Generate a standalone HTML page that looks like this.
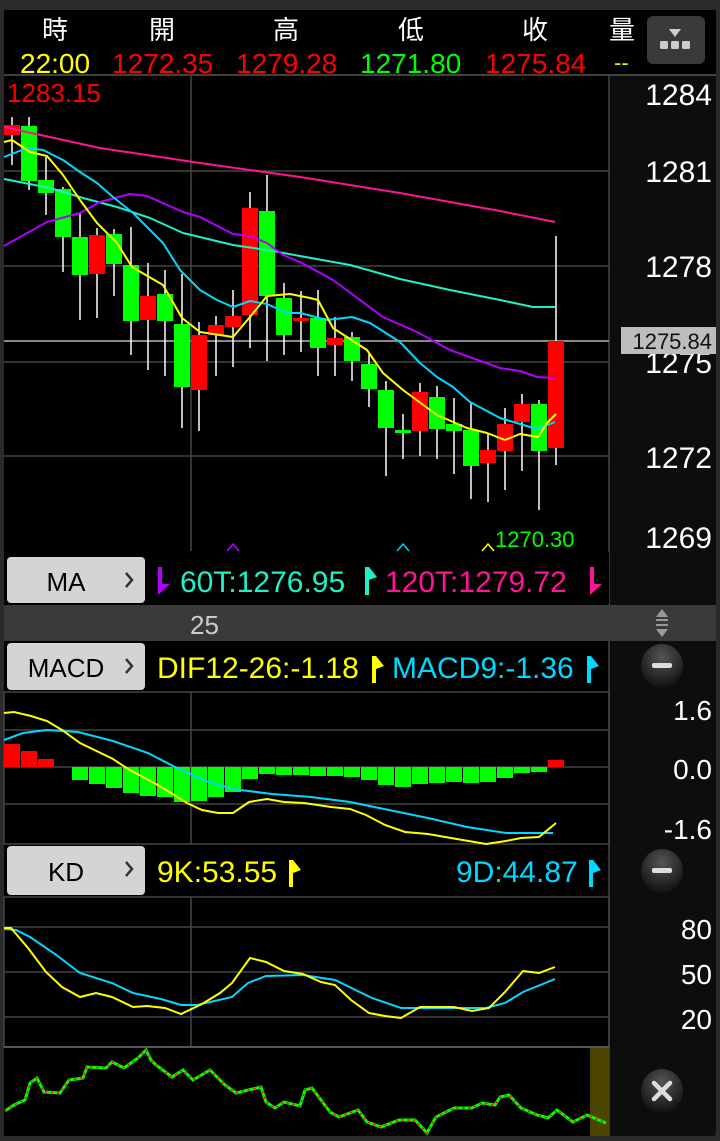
<!DOCTYPE html>
<html><head><meta charset="utf-8"><style>
html,body{margin:0;padding:0;background:#2a2a2a;}
svg{display:block;}
text{font-family:"Liberation Sans","Noto Sans CJK TC",sans-serif;}
</style></head><body>
<svg id="s" width="720" height="1141" xmlns="http://www.w3.org/2000/svg">
<rect x="0" y="0" width="720" height="1141" fill="#2a2a2a"/>
<rect x="4" y="10" width="712" height="1126" rx="3" fill="#0d0d0d"/>
<rect x="4" y="10" width="712" height="65" fill="#000"/>
<rect x="4" y="75" width="605" height="1061" fill="#000"/>
<line x1="4" y1="75" x2="716" y2="75" stroke="#555" stroke-width="1.5"/>
<!-- header -->
<g fill="#fff" font-size="26" text-anchor="middle">
<text x="55" y="39">時</text><text x="162" y="39">開</text><text x="286" y="39">高</text><text x="411" y="39">低</text><text x="535" y="39">收</text><text x="622" y="39">量</text>
</g>
<g font-size="28">
<text x="20" y="73" fill="#ffff00">22:00</text>
<text x="112" y="73" fill="#ff0000">1272.35</text>
<text x="236" y="73" fill="#ff0000">1279.28</text>
<text x="360" y="73" fill="#00ff00">1271.80</text>
<text x="485" y="73" fill="#ff0000">1275.84</text>
<text x="614" y="70" fill="#e6e600" font-size="22">--</text>
</g>
<rect x="647" y="16" width="58" height="48" rx="6" fill="#3a3a3a"/>
<polygon points="669,29 681,29 675,37" fill="#ccc"/>
<rect x="660" y="41" width="8" height="8" rx="1.5" fill="#ccc"/><rect x="671" y="41" width="8" height="8" rx="1.5" fill="#ccc"/><rect x="682" y="41" width="8" height="8" rx="1.5" fill="#ccc"/>
<!-- main grid -->
<g stroke="#444" stroke-width="1.5">
<line x1="4" y1="171" x2="609" y2="171"/><line x1="4" y1="266" x2="609" y2="266"/><line x1="4" y1="362" x2="609" y2="362"/><line x1="4" y1="456" x2="609" y2="456"/>
<line x1="191" y1="76" x2="191" y2="551"/>
<line x1="609" y1="76" x2="609" y2="1136"/>
</g>
<line x1="4" y1="341" x2="609" y2="341" stroke="#888" stroke-width="2"/>
<g id="cand"></g>
<g id="lines" fill="none" stroke-width="2" stroke-linejoin="round"></g>
<text x="7" y="102" fill="#ff0000" font-size="26">1283.15</text>
<text x="495" y="547" fill="#00ff00" font-size="22">1270.30</text>
<g fill="none" stroke-width="1.5"><polyline points="227,551 233,544 239,551" stroke="#b000ff"/><polyline points="397,551 403,544 409,551" stroke="#00d0ff"/><polyline points="482,551 488,544 494,551" stroke="#ffff00"/></g>
<g fill="#fff" font-size="30" text-anchor="end">
<text x="712" y="105">1284</text><text x="712" y="182">1281</text><text x="712" y="277">1278</text><text x="712" y="373">1275</text><text x="712" y="468">1272</text><text x="712" y="548">1269</text>
</g>
<rect x="621" y="327" width="95" height="27" fill="#bdbdbd"/>
<text x="712" y="349" fill="#111" font-size="22" text-anchor="end">1275.84</text>
<!-- MA row -->
<rect x="4" y="552" width="605" height="52" fill="#000"/>
<rect x="7" y="557" width="138" height="46" rx="4" fill="#d4d4d4"/>
<text x="66" y="591" font-size="26" fill="#000" text-anchor="middle">MA</text>
<polyline points="126,573 132,580 126,587" fill="none" stroke="#333" stroke-width="2.5"/>
<polygon points="158,567 162,567 162,584 170,584 158,595" fill="#b000ff"/>
<text x="180" y="592" font-size="30" fill="#20f0c8">60T:1276.95</text>
<polygon points="365,567 369,567 377,577 369,580 369,595 365,595" fill="#20f0c8"/>
<text x="385" y="592" font-size="30" fill="#ff1493">120T:1279.72</text>
<polygon points="590,567 594,567 594,584 602,584 590,595" fill="#ff1493"/>
<rect x="4" y="605" width="712" height="36" fill="#3a3a3a"/>
<text x="190" y="634" font-size="26" fill="#ccc">25</text>
<polygon points="656,617 668,617 662,609" fill="#999"/><rect x="656" y="619" width="12" height="2" fill="#999"/><rect x="656" y="624" width="12" height="2" fill="#999"/><polygon points="656,629 668,629 662,637" fill="#999"/>
<!-- MACD row -->
<rect x="7" y="643" width="138" height="47" rx="4" fill="#d4d4d4"/>
<text x="66" y="677" font-size="26" fill="#000" text-anchor="middle">MACD</text>
<polyline points="126,659 132,666 126,673" fill="none" stroke="#333" stroke-width="2.5"/>
<text x="157" y="678" font-size="30" fill="#ffff00">DIF12-26:-1.18</text>
<polygon points="372,656 376,656 384,666 376,669 376,683 372,683" fill="#ffff00"/>
<text x="392" y="678" font-size="30" fill="#00d8ff">MACD9:-1.36</text>
<polygon points="587,656 591,656 599,666 591,669 591,683 587,683" fill="#00d8ff"/>
<defs><radialGradient id="g" cx="50%" cy="30%" r="70%"><stop offset="0" stop-color="#555"/><stop offset="1" stop-color="#111"/></radialGradient></defs>
<ellipse cx="662" cy="666" rx="21" ry="22" fill="url(#g)"/><rect x="652" y="663" width="20" height="5" rx="2" fill="#ddd"/>
<rect x="4" y="692" width="605" height="152" fill="none" stroke="#444" stroke-width="1.5"/>
<g stroke="#444" stroke-width="1.5"><line x1="4" y1="730" x2="609" y2="730"/><line x1="4" y1="767" x2="609" y2="767"/><line x1="4" y1="804" x2="609" y2="804"/><line x1="191" y1="692" x2="191" y2="844"/></g>
<g id="hist"></g>
<g fill="#fff" font-size="28" text-anchor="end"><text x="712" y="720">1.6</text><text x="712" y="779">0.0</text><text x="712" y="839">-1.6</text></g>
<!-- KD row -->
<rect x="7" y="846" width="138" height="49" rx="4" fill="#d4d4d4"/>
<text x="66" y="881" font-size="26" fill="#000" text-anchor="middle">KD</text>
<polyline points="126,862 132,869 126,876" fill="none" stroke="#333" stroke-width="2.5"/>
<text x="157" y="882" font-size="30" fill="#ffff00">9K:53.55</text>
<polygon points="289,860 293,860 301,870 293,873 293,887 289,887" fill="#ffff00"/>
<text x="456" y="882" font-size="30" fill="#00d8ff">9D:44.87</text>
<polygon points="589,860 593,860 601,870 593,873 593,887 589,887" fill="#00d8ff"/>
<ellipse cx="662" cy="871" rx="21" ry="22" fill="url(#g)"/><rect x="652" y="868" width="20" height="5" rx="2" fill="#ddd"/>
<rect x="4" y="897" width="605" height="150" fill="none" stroke="#444" stroke-width="1.5"/>
<g stroke="#444" stroke-width="1.5"><line x1="4" y1="927" x2="609" y2="927"/><line x1="4" y1="972" x2="609" y2="972"/><line x1="4" y1="1017" x2="609" y2="1017"/><line x1="191" y1="897" x2="191" y2="1047"/></g>
<g fill="#fff" font-size="28" text-anchor="end"><text x="712" y="939">80</text><text x="712" y="984">50</text><text x="712" y="1029">20</text></g>
<!-- minimap -->
<line x1="4" y1="1047" x2="609" y2="1047" stroke="#555" stroke-width="2"/>
<rect x="590" y="1048" width="19" height="88" fill="#4a4400"/>
<g id="mini" fill="none"></g>
<ellipse cx="662" cy="1091" rx="21" ry="22" fill="url(#g)"/>
<path d="M654,1083 L670,1099 M670,1083 L654,1099" stroke="#ddd" stroke-width="4.5" stroke-linecap="round"/>
</svg>
<script>
var NS="http://www.w3.org/2000/svg";
function el(p,t,a){var e=document.createElementNS(NS,t);for(var k in a)e.setAttribute(k,a[k]);p.appendChild(e);return e;}
var R="#ff0000",G="#00ff00";
var c=[[R,125,135,117,165],[G,126,181,117,190],[G,180,193,157,215],[G,189,237,187,272],[G,237,275,213,320],[R,235,274,228,318],[G,234,264,229,296],[G,265,321,227,355],[R,296,320,263,370],[G,294,321,270,376],[G,324,387,274,428],[R,335,390,322,431],[R,325,335,316,376],[R,316,327,290,367],[R,208,315,192,348],[G,211,296,175,361],[G,298,335,283,355],[R,318,321,291,352],[G,318,348,290,376],[R,338,345,317,376],[G,337,361,332,381],[G,364,389,354,407],[G,390,428,381,476],[G,430,433,414,459],[R,392,431,383,456],[G,397,429,386,459],[G,424,431,398,474],[G,430,466,402,499],[R,450,463,434,502],[R,424,451,408,490],[R,404,422,394,471],[G,404,451,400,510],[R,341,448,236,465]];
var cg=document.getElementById("cand");
c.forEach(function(d,i){var x=4+17*i;el(cg,"line",{x1:x+8,y1:d[3],x2:x+8,y2:d[4],stroke:"#fff","stroke-width":1.5});el(cg,"rect",{x:x,y:d[1],width:16,height:Math.max(2,d[2]-d[1]),fill:d[0]});});
var L=document.getElementById("lines");
function pl(g,pts,col,w){el(g,"polyline",{points:pts,stroke:col,"stroke-width":w||2,fill:"none"});}
pl(L,"4,127 100,148 200,163 300,177 400,193 500,211 555,222","#ff1493");
pl(L,"4,179 50,188 83,198 117,207 150,218 183,233 233,245 267,250 300,256 350,265 400,279 450,290 500,300 533,307 555,307","#20f0c8");
pl(L,"4,246 47,222 80,213 100,202 130,194 147,196 183,212 200,217 233,234 250,236 267,243 283,255 300,262 333,280 383,317 417,332 450,350 500,368 520,371 537,377 555,378","#b000ff");
pl(L,"4,157 27,148 43,150 63,160 80,172 97,183 113,197 133,213 163,243 180,270 200,290 217,300 233,307 250,301 267,304 287,313 300,313 327,320 352,317 370,323 400,342 420,363 437,377 453,387 470,402 500,418 520,424 537,429 555,422","#00d8ff");
pl(L,"4,142 12,140 30,152 47,156 63,175 80,200 97,223 117,243 132,267 163,285 182,318 200,332 233,337 250,317 267,296 290,294 310,298 318,300 333,328 367,350 383,373 403,390 437,415 467,428 487,433 505,440 520,434 538,437 547,423 556,414","#ffff00");
var H=document.getElementById("hist");
el(H,"rect",{x:4,y:744,width:16,height:23,fill:R});el(H,"rect",{x:21,y:751,width:16,height:16,fill:R});el(H,"rect",{x:38,y:759,width:16,height:8,fill:R});
var b=[780,784,788,793,796,797,802,801,797,792,779,774,775,775,776,776,777,780,785,787,784,783,782,783,782,778,773,772];
b.forEach(function(v,i){el(H,"rect",{x:72+17*i,y:767,width:16,height:v-767,fill:G});});
el(H,"rect",{x:548,y:760,width:16,height:7,fill:R});
pl(H,"4,740 23,733 47,730 78,732 113,741 148,753 175,767 206,781 233,789 272,794 311,797 350,802 389,810 428,818 467,827 506,833 553,833","#00d8ff");
pl(H,"4,713 14,712 31,716 47,721 62,730 80,743 113,759 128,769 156,784 171,793 187,803 202,810 218,813 233,813 249,802 267,799 284,802 304,803 331,807 350,809 366,815 385,825 405,832 428,834 451,838 486,844 506,841 521,838 539,837 556,823","#ffff00");
var K=document.getElementById("mini").parentNode;
var kg=el(K,"g",{});
pl(kg,"4,929 16,930 30,937 55,954 80,973 112,983 133,993 161,999 181,1005 197,1005 232,997 248,983 266,976 303,975 335,980 372,998 401,1008 486,1008 505,1003 523,992 555,979","#00d8ff");
pl(kg,"4,928 11,928 28,948 46,972 62,987 80,997 96,993 112,997 133,1007 147,1006 165,1008 181,1014 202,1004 220,993 232,983 250,958 266,962 284,971 303,974 321,982 335,985 351,1000 369,1013 385,1016 401,1018 420,1007 454,1007 472,1011 489,1008 505,992 523,971 539,973 555,967","#ffff00");
var M=document.getElementById("mini");
var mp="5,1111 14,1105 25,1100 30,1083 37,1078 44,1092 60,1093 69,1080 83,1078 87,1067 106,1068 112,1062 124,1068 138,1058 146,1050 151,1060 156,1065 172,1077 183,1070 193,1080 210,1070 225,1085 236,1093 261,1087 266,1102 275,1108 284,1102 300,1106 305,1090 312,1088 330,1112 339,1117 358,1110 367,1122 381,1127 399,1120 415,1120 427,1133 436,1117 454,1108 472,1108 482,1103 495,1105 500,1097 509,1095 521,1108 537,1115 548,1118 557,1110 573,1122 587,1115 606,1123";
el(M,"polyline",{points:mp,stroke:"#00ff00","stroke-width":3,fill:"none"});
el(M,"polyline",{points:mp,stroke:"#ff0000","stroke-width":1.5,fill:"none","stroke-dasharray":"2 4"});
</script>
</body></html>
